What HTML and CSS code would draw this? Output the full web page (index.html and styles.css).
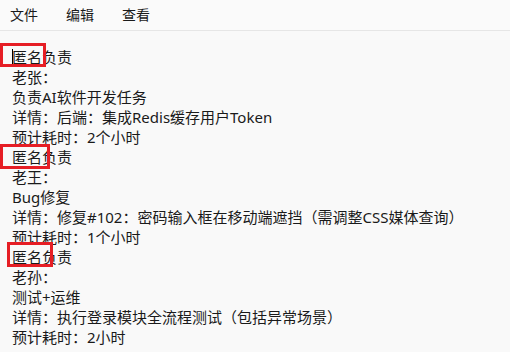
FILE: index.html
```html
<!DOCTYPE html>
<html lang="zh-CN">
<head>
<meta charset="utf-8">
<title>记事本</title>
<link rel="stylesheet" href="styles.css">
</head>
<body>
<div class="window">
  <nav class="menubar">
    <span class="menu-item">文件</span>
    <span class="menu-item">编辑</span>
    <span class="menu-item">查看</span>
  </nav>
  <main class="editor">
    <div class="line">匿名负责</div>
    <div class="line">老张：</div>
    <div class="line">负责AI软件开发任务</div>
    <div class="line">详情：后端：集成Redis缓存用户Token</div>
    <div class="line">预计耗时：2个小时</div>
    <div class="line">匿名负责</div>
    <div class="line">老王：</div>
    <div class="line">Bug修复</div>
    <div class="line">详情：修复#102：密码输入框在移动端遮挡（需调整CSS媒体查询）</div>
    <div class="line">预计耗时：1个小时</div>
    <div class="line">匿名负责</div>
    <div class="line">老孙：</div>
    <div class="line">测试+运维</div>
    <div class="line">详情：执行登录模块全流程测试（包括异常场景）</div>
    <div class="line">预计耗时：2小时</div>
    <span class="caret"></span>
    <span class="mark mark-1"></span>
    <span class="mark mark-2"></span>
    <span class="mark mark-3"></span>
  </main>
</div>
</body>
</html>
```
FILE: styles.css
```css
html, body {
  margin: 0;
  padding: 0;
  background: #f9f9f9;
}
body {
  font-family: "Noto Sans", "Noto Sans CJK SC", sans-serif;
  color: #1a1a1a;
}
.window {
  width: 510px;
  height: 352px;
  overflow: hidden;
  display: flex;
  flex-direction: column;
}
.menubar {
  height: 30px;
  display: flex;
  align-items: center;
  gap: 28px;
  padding: 0 0 0 10px;
  border-bottom: 1px solid #e6e6e6;
  background: #fafafa;
  font-size: 14px;
  line-height: 20px;
  flex: none;
}
.menu-item {
  display: block;
}
.editor {
  position: relative;
  flex: 1;
  padding: 16px 0 0 12px;
  font-size: 15px;
  line-height: 20px;
  background: #f9f9f9;
}
.line {
  white-space: pre;
  height: 20px;
}
.caret {
  position: absolute;
  left: 12px;
  top: 18px;
  width: 1px;
  height: 17px;
  background: #000;
}
.mark {
  position: absolute;
  border: 3px solid #e61e25;
  box-sizing: border-box;
}
.mark-1 { left: 0; top: 12px; width: 46px; height: 24px; }
.mark-2 { left: 0; top: 113px; width: 50px; height: 25px; }
.mark-3 { left: 7px; top: 211px; width: 46px; height: 25px; }
```
